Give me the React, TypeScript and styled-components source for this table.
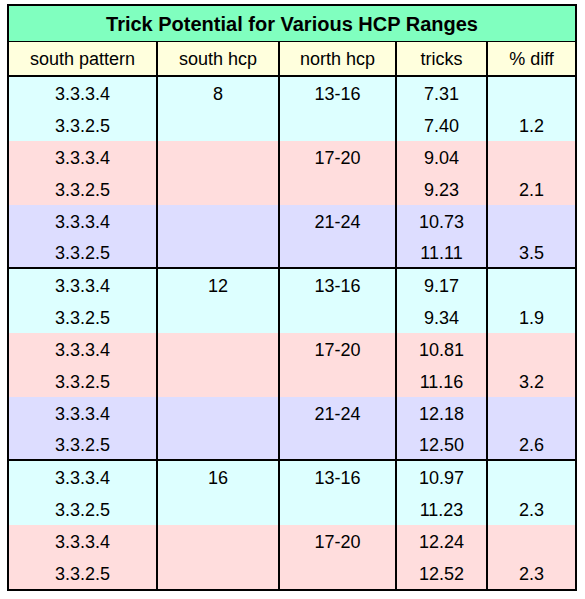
import React from "react";
import styled, { createGlobalStyle } from "styled-components";

const Global = createGlobalStyle`
  html, body { margin: 0; padding: 0; background: #ffffff; }
  body { font-family: "Liberation Sans", Arial, sans-serif; color: #000; }
`;

const Page = styled.div`
  padding: 4px 0 0 7px;
`;

const Frame = styled.div`
  width: 570px;
  box-sizing: border-box;
  border: 2px solid #000;
`;

const Title = styled.div`
  height: 36px;
  box-sizing: border-box;
  padding-top: 2px;
  border-bottom: 1px solid #000;
  background: #80ffbf;
  display: flex;
  align-items: center;
  justify-content: center;
  font-weight: bold;
  font-size: 20px;
`;

const COLS = "147px 122px 117px 91px 89px";

const Row = styled.div<{ $bg: string; $h: number; $bottom?: boolean }>`
  display: grid;
  grid-template-columns: ${COLS};
  height: ${(p) => p.$h}px;
  box-sizing: border-box;
  background: ${(p) => p.$bg};
  border-bottom: ${(p) => (p.$bottom ? "2px solid #000" : "none")};
`;

const Cell = styled.div<{ $first?: boolean }>`
  display: flex;
  align-items: center;
  justify-content: center;
  padding-top: 2px;
  box-sizing: border-box;
  font-size: 18px;
  border-left: ${(p) => (p.$first ? "none" : "2px solid #000")};
  white-space: nowrap;
`;

const COLORS = ["#ddffff", "#ffdddd", "#ddddff"];

type R = [string, string, string, string, string];

const groups: R[][] = [
  [
    ["3.3.3.4", "8", "13-16", "7.31", ""],
    ["3.3.2.5", "", "", "7.40", "1.2"],
    ["3.3.3.4", "", "17-20", "9.04", ""],
    ["3.3.2.5", "", "", "9.23", "2.1"],
    ["3.3.3.4", "", "21-24", "10.73", ""],
    ["3.3.2.5", "", "", "11.11", "3.5"],
  ],
  [
    ["3.3.3.4", "12", "13-16", "9.17", ""],
    ["3.3.2.5", "", "", "9.34", "1.9"],
    ["3.3.3.4", "", "17-20", "10.81", ""],
    ["3.3.2.5", "", "", "11.16", "3.2"],
    ["3.3.3.4", "", "21-24", "12.18", ""],
    ["3.3.2.5", "", "", "12.50", "2.6"],
  ],
  [
    ["3.3.3.4", "16", "13-16", "10.97", ""],
    ["3.3.2.5", "", "", "11.23", "2.3"],
    ["3.3.3.4", "", "17-20", "12.24", ""],
    ["3.3.2.5", "", "", "12.52", "2.3"],
  ],
];

const headers = ["south pattern", "south hcp", "north hcp", "tricks", "% diff"];

export default function App() {
  return (
    <Page>
      <Global />
      <Frame>
        <Title>Trick Potential for Various HCP Ranges</Title>
        <Row $bg="#ffffdd" $h={35} $bottom>
          {headers.map((h, i) => (
            <Cell key={h} $first={i === 0}>
              {h}
            </Cell>
          ))}
        </Row>
        {groups.map((g, gi) =>
          g.map((r, ri) => {
            const last = ri === g.length - 1 && gi < groups.length - 1;
            return (
              <Row
                key={`${gi}-${ri}`}
                $bg={COLORS[Math.floor(ri / 2)]}
                $h={32}
                $bottom={last}
              >
                {r.map((c, ci) => (
                  <Cell key={ci} $first={ci === 0}>
                    {c}
                  </Cell>
                ))}
              </Row>
            );
          })
        )}
      </Frame>
    </Page>
  );
}
